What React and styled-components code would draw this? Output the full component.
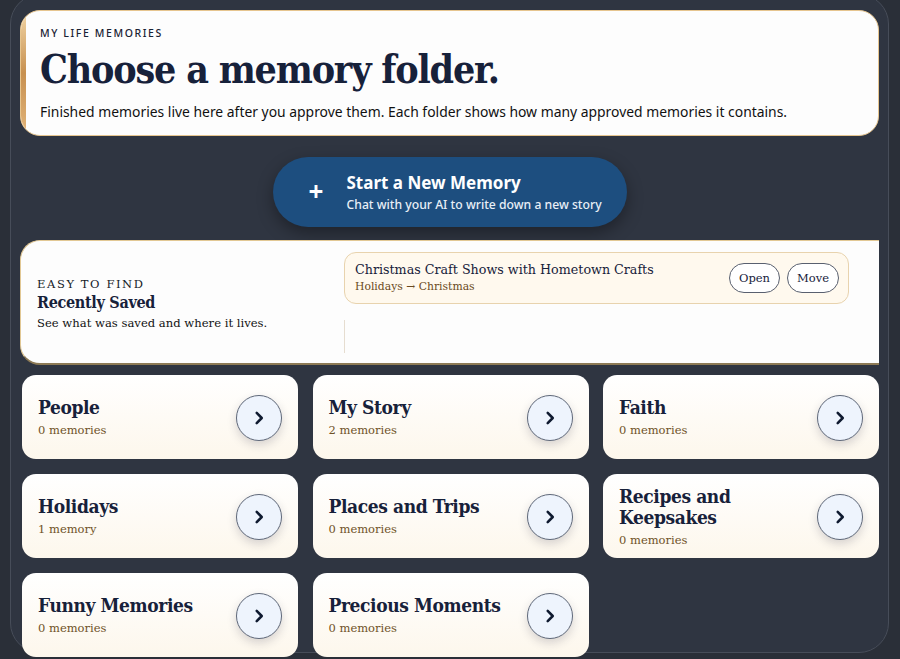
import React from "react";
import styled, { createGlobalStyle } from "styled-components";

const Global = createGlobalStyle`
  html, body { margin: 0; padding: 0; background: #2a2f38; }
  body { width: 900px; height: 659px; overflow: hidden; }
  * { box-sizing: border-box; }
`;

const SERIF_HEAD = `"DejaVu Serif Condensed", "DejaVu Serif", "Liberation Serif", serif`;
const SERIF_BODY = `"DejaVu Serif", "Liberation Serif", serif`;
const SANS = `"Noto Sans", "Open Sans", sans-serif`;

const Frame = styled.div`
  margin: -6px 11px 0 10px;
  height: 659px;
  border: 1px solid #474d59;
  border-radius: 30px;
  background: #2f3541;
  padding: 15px 9px 0 9px;
  display: flex;
  flex-direction: column;
  & > * { flex-shrink: 0; }
`;

const Hero = styled.header`
  position: relative;
  background: #fdfdfd;
  border: 1px solid #e6c58f;
  border-radius: 20px;
  padding: 15px 20px 13px 19px;
  overflow: hidden;
  &::before {
    content: "";
    position: absolute;
    left: 0; top: 0; bottom: 0;
    width: 5px;
    background: linear-gradient(180deg, #f2d6a6, #c79050 50%, #e2b57a);
  }
`;

const Eyebrow = styled.div`
  font-family: ${SANS};
  font-size: 10.5px;
  font-weight: 500;
  letter-spacing: 1.6px;
  color: #1a2233;
  line-height: 14px;
`;

const Title = styled.h1`
  margin: 4px 0 0;
  font-family: ${SERIF_HEAD};
  font-stretch: condensed;
  font-weight: 700;
  font-size: 39px;
  letter-spacing: -1.2px;
  line-height: 50px;
  color: #17213a;
`;

const Lead = styled.p`
  margin: 8px 0 0;
  font-family: ${SANS};
  font-size: 13.9px;
  color: #111;
  line-height: 20px;
`;

const CtaRow = styled.div`
  display: flex;
  justify-content: center;
  padding: 21px 0 13px;
`;

const Cta = styled.button`
  width: 354px;
  height: 70px;
  border: none;
  border-radius: 35px;
  background: #1d4e7f;
  box-shadow: 0 6px 16px rgba(0,0,0,0.35);
  display: flex;
  align-items: center;
  padding: 0 0 0 36px;
  gap: 22px;
  color: #fff;
  cursor: pointer;
  text-align: left;
`;

const Plus = styled.span`
  font-family: ${SANS};
  font-size: 26px;
  font-weight: 700;
  line-height: 1;
  width: 16px;
  margin-top: -2px;
`;

const CtaText = styled.span`
  display: flex;
  flex-direction: column;
  gap: 3px;
`;

const CtaTitle = styled.span`
  font-family: ${SANS};
  font-size: 17px;
  font-weight: 700;
  line-height: 22px;
`;

const CtaSub = styled.span`
  font-family: ${SANS};
  font-size: 12.2px;
  font-weight: 500;
  line-height: 16px;
  color: #e8eef6;
`;

const Recent = styled.section`
  display: grid;
  grid-template-columns: 323px 1fr;
  background: #fdfdfd;
  border: 1px solid #e2c894;
  border-right: none;
  border-bottom: 2px solid #8d7a55;
  border-radius: 20px 0 0 20px;
  height: 125px;
`;

const RecentIntro = styled.div`
  display: flex;
  flex-direction: column;
  justify-content: center;
  padding: 4px 0 0 16px;
`;

const RecentEyebrow = styled.div`
  font-family: ${SERIF_BODY};
  font-size: 11.5px;
  letter-spacing: 1.6px;
  color: #151b28;
  line-height: 16px;
`;

const RecentTitle = styled.div`
  font-family: ${SERIF_HEAD};
  font-stretch: condensed;
  font-weight: 700;
  font-size: 16px;
  letter-spacing: -0.3px;
  color: #17213a;
  line-height: 21px;
`;

const RecentSub = styled.div`
  font-family: ${SERIF_BODY};
  font-size: 11.6px;
  color: #111;
  line-height: 18px;
  margin-top: 1px;
`;

const RecentList = styled.div`
  display: flex;
  flex-direction: column;
  align-items: flex-start;
  padding: 11px 30px 0 0;
`;

const Item = styled.div`
  width: 505px;
  height: 52px;
  background: #fff9ee;
  border: 1px solid #e8d3ae;
  border-radius: 12px;
  display: flex;
  align-items: center;
  padding: 0 9px 0 10px;
`;

const ItemText = styled.div`
  flex: 1;
  display: flex;
  flex-direction: column;
`;

const ItemTitle = styled.div`
  font-family: ${SERIF_BODY};
  font-size: 12.7px;
  color: #17213a;
  line-height: 18px;
`;

const ItemPath = styled.div`
  font-family: ${SERIF_BODY};
  font-size: 10.8px;
  color: #6a4a22;
  line-height: 16px;
`;

const Pill = styled.button`
  height: 30px;
  padding: 0 9px;
  margin-left: 7px;
  border: 1.5px solid #59606f;
  border-radius: 15px;
  background: #fff;
  font-family: ${SERIF_BODY};
  font-size: 11.5px;
  color: #17213a;
  cursor: pointer;
`;

const Divider = styled.div`
  width: 1px;
  height: 33px;
  margin-top: 16px;
  background: #e6ddd0;
`;

const Grid = styled.div`
  display: grid;
  grid-template-columns: repeat(3, 276px);
  column-gap: 14.5px;
  row-gap: 15px;
  padding: 10px 0 0 2px;
`;

const Folder = styled.div`
  height: 84px;
  border-radius: 14px;
  background: linear-gradient(180deg, #ffffff 0%, #fdf7ec 100%);
  display: flex;
  align-items: center;
  padding: 0 16px 0 16px;
`;

const FolderText = styled.div`
  flex: 1;
  display: flex;
  flex-direction: column;
  gap: 4px;
  padding-top: 1px;
`;

const FolderName = styled.div`
  font-family: ${SERIF_HEAD};
  font-stretch: condensed;
  font-weight: 700;
  font-size: 19px;
  letter-spacing: -0.4px;
  color: #17213a;
  line-height: 21px;
`;

const FolderCount = styled.div`
  font-family: ${SERIF_BODY};
  font-size: 11.5px;
  color: #6f5227;
  line-height: 16px;
`;

const Arrow = styled.button`
  width: 46px;
  height: 46px;
  border-radius: 50%;
  border: 1.5px solid #5f6879;
  background: #eef4fd;
  box-shadow: 0 4px 10px rgba(40,40,60,0.18);
  display: flex;
  align-items: center;
  justify-content: center;
  padding: 0;
  margin-top: 2px;
  cursor: pointer;
`;

const Chevron = () => (
  <svg width="22" height="22" viewBox="0 0 24 24" fill="none" stroke="#0f1a30" strokeWidth="2.8" strokeLinecap="round" strokeLinejoin="round">
    <path d="M9.5 6.5l5.5 5.5-5.5 5.5" />
  </svg>
);

const folders = [
  ["People", "0 memories"],
  ["My Story", "2 memories"],
  ["Faith", "0 memories"],
  ["Holidays", "1 memory"],
  ["Places and Trips", "0 memories"],
  ["Recipes and Keepsakes", "0 memories"],
  ["Funny Memories", "0 memories"],
  ["Precious Moments", "0 memories"],
];

export default function App() {
  return (
    <>
      <Global />
      <Frame>
        <Hero>
          <Eyebrow>MY LIFE MEMORIES</Eyebrow>
          <Title>Choose a memory folder.</Title>
          <Lead>
            Finished memories live here after you approve them. Each folder shows how many approved memories it contains.
          </Lead>
        </Hero>
        <CtaRow>
          <Cta>
            <Plus>+</Plus>
            <CtaText>
              <CtaTitle>Start a New Memory</CtaTitle>
              <CtaSub>Chat with your AI to write down a new story</CtaSub>
            </CtaText>
          </Cta>
        </CtaRow>
        <Recent>
          <RecentIntro>
            <RecentEyebrow>EASY TO FIND</RecentEyebrow>
            <RecentTitle>Recently Saved</RecentTitle>
            <RecentSub>See what was saved and where it lives.</RecentSub>
          </RecentIntro>
          <RecentList>
            <Item>
              <ItemText>
                <ItemTitle>Christmas Craft Shows with Hometown Crafts</ItemTitle>
                <ItemPath>Holidays → Christmas</ItemPath>
              </ItemText>
              <Pill>Open</Pill>
              <Pill>Move</Pill>
            </Item>
            <Divider />
          </RecentList>
        </Recent>
        <Grid>
          {folders.map(([name, count]) => (
            <Folder key={name}>
              <FolderText>
                <FolderName>{name}</FolderName>
                <FolderCount>{count}</FolderCount>
              </FolderText>
              <Arrow aria-label={`Open ${name}`}>
                <Chevron />
              </Arrow>
            </Folder>
          ))}
        </Grid>
      </Frame>
    </>
  );
}
